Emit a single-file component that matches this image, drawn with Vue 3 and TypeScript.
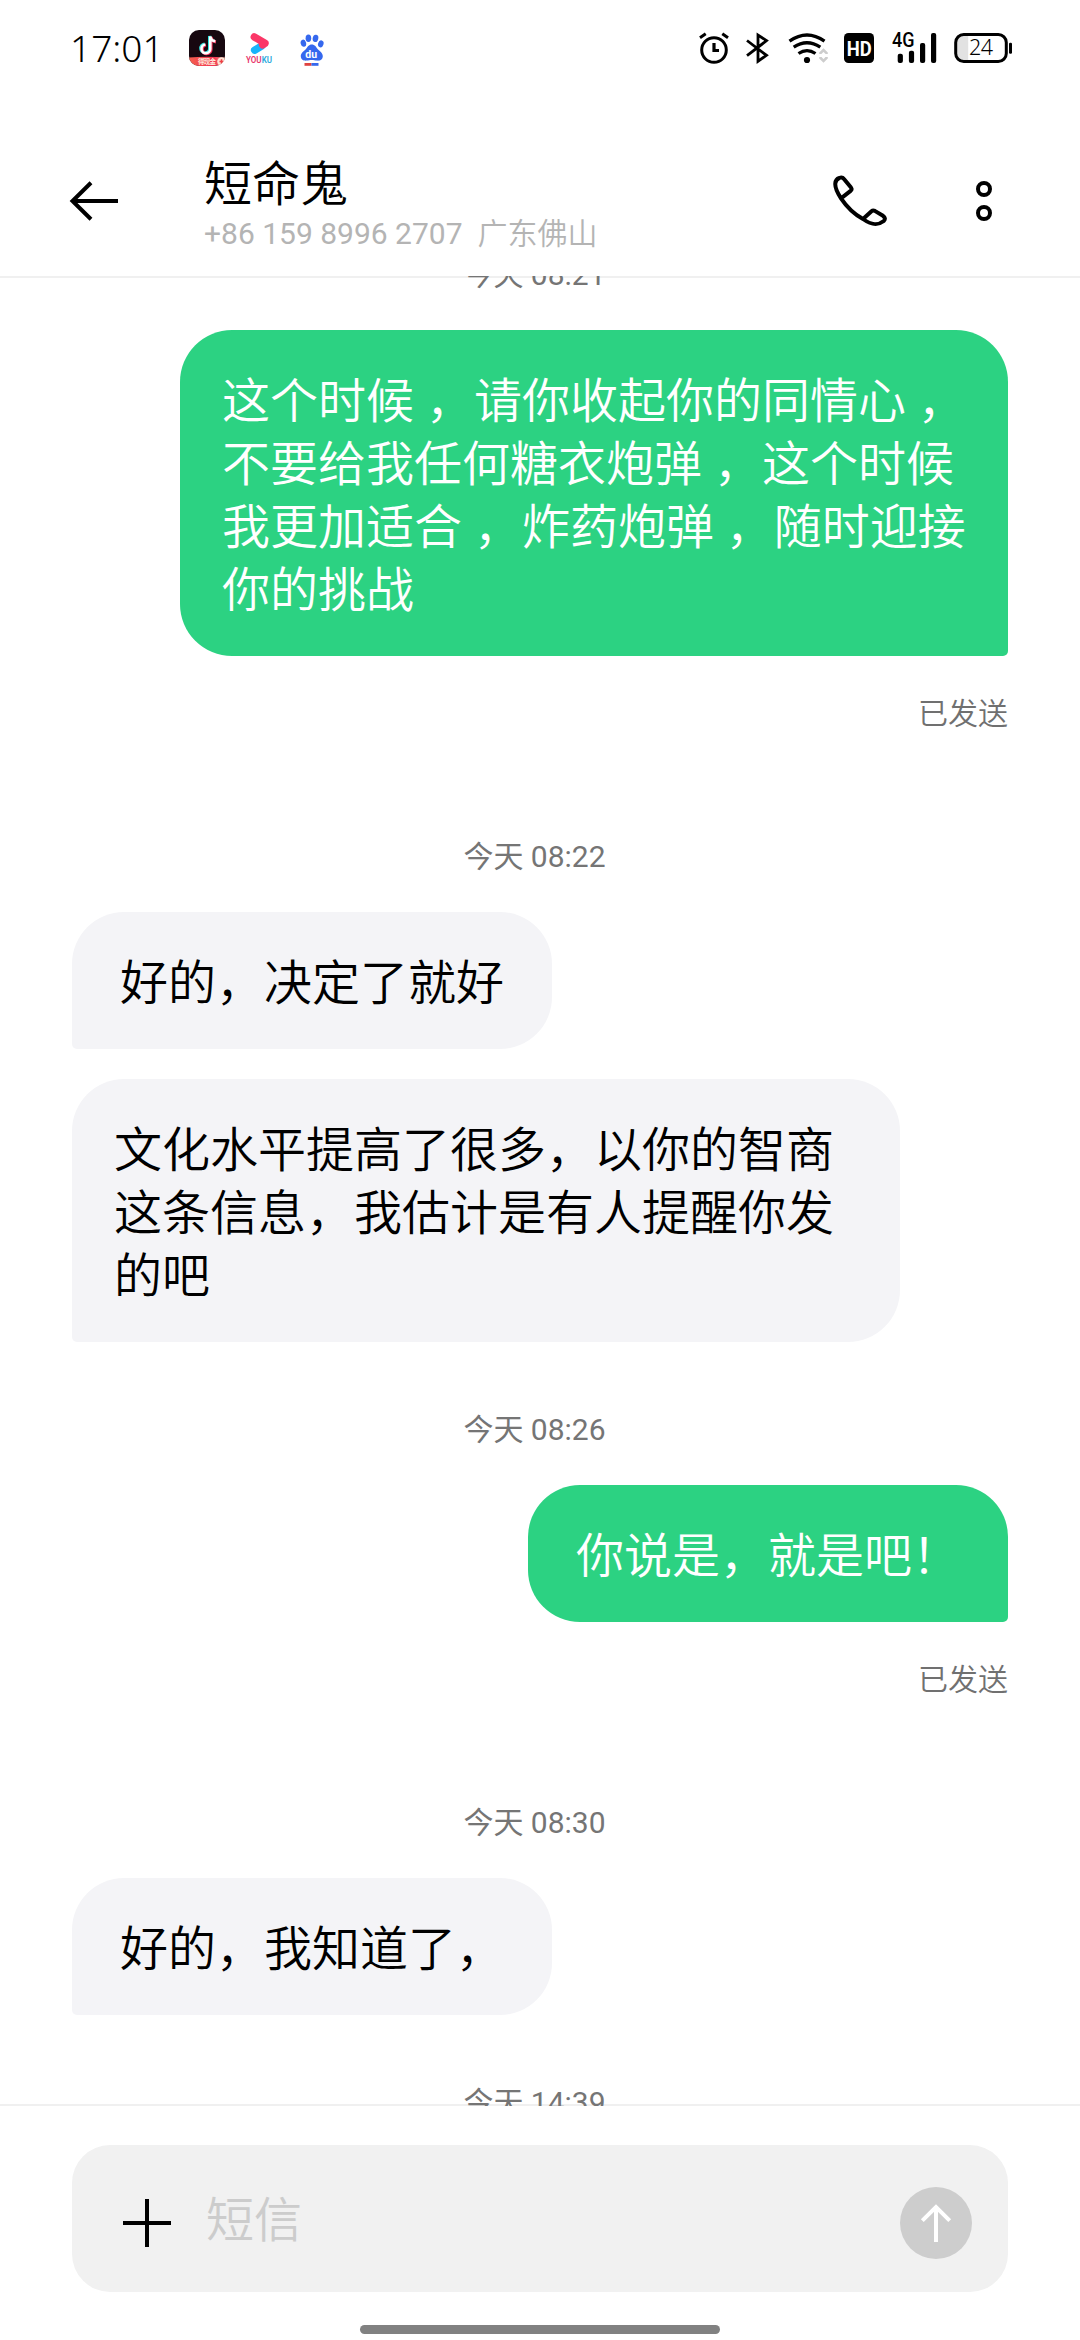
<script setup lang="ts">
interface Entry {
  kind: 'time' | 'in' | 'out' | 'status'
  lines: string[]
}

const contact = { name: '短命鬼', phone: '+86 159 8996 2707', region: '广东佛山' }

const entries: Entry[] = [
  { kind: 'time', lines: ['今天 08:21'] },
  {
    kind: 'out',
    lines: [
      '这个时候 ，请你收起你的同情心 ，',
      '不要给我任何糖衣炮弹 ，这个时候',
      '我更加适合 ，炸药炮弹 ，随时迎接',
      '你的挑战',
    ],
  },
  { kind: 'status', lines: ['已发送'] },
  { kind: 'time', lines: ['今天 08:22'] },
  { kind: 'in', lines: ['好的，决定了就好'] },
  { kind: 'in', lines: ['文化水平提高了很多，以你的智商', '这条信息，我估计是有人提醒你发', '的吧'] },
  { kind: 'time', lines: ['今天 08:26'] },
  { kind: 'out', lines: ['你说是，就是吧！'] },
  { kind: 'status', lines: ['已发送'] },
  { kind: 'time', lines: ['今天 08:30'] },
  { kind: 'in', lines: ['好的，我知道了，'] },
  { kind: 'time', lines: ['今天 14:39'] },
]
</script>

<template>
  <div class="screen">
    <div class="statusbar">
      <span class="clock">17:01</span>
      <div class="apps">
        <svg width="36" height="40" viewBox="189 28 36 40">
          <defs>
            <clipPath id="tile"><rect x="189" y="30" width="36" height="36" rx="10" /></clipPath>
            <linearGradient id="band" x1="0" x2="1">
              <stop offset="0" stop-color="#f5604f" />
              <stop offset="0.7" stop-color="#f23352" />
              <stop offset="1" stop-color="#f7a08c" />
            </linearGradient>
          </defs>
          <g clip-path="url(#tile)">
            <rect x="189" y="30" width="36" height="36" fill="#170810" />
            <g fill="none" stroke-width="3.2">
              <path d="M204.6 44a4.4 4.4 0 1 0 5 4.4V36c.6 3 2.600 4.600 5 4.800" stroke="#35e3e0" />
              <path d="M206 45a4.400 4.400 0 1 0 5 4.400V37c.6 3 2.600 4.600 5 4.800" stroke="#f0335a" />
              <path d="M205.300 44.500a4.400 4.400 0 1 0 5 4.400V36.500c.6 3 2.600 4.600 5 4.800" stroke="#fff" stroke-width="2.600" />
            </g>
            <path d="M189 57.500Q207 56 225 57.500V66H189z" fill="url(#band)" />
            <text x="198" y="64.200" font-size="6.500" font-weight="700" fill="#ffe9dc" textLength="18" class="cjk">得现金</text>
            <circle cx="221.500" cy="61.500" r="4.300" fill="#fbe3d4" />
            <path d="M221.500 59.300v4.400M219.500 61.500h4" stroke="#ee3f45" stroke-width="1.500" />
          </g>
        </svg>
        <svg width="28" height="40" viewBox="245 28 28 40">
          <path d="M254.600 50.200L262 45.800" stroke="#18b4fb" stroke-width="7.400" stroke-linecap="round" />
          <path d="M254.300 37L265 43.300L262.600 44.800" fill="none" stroke="#fb3767" stroke-width="7.400" stroke-linecap="round" stroke-linejoin="round" />
          <text x="246" y="63" font-size="8.300" font-weight="600" textLength="26" lengthAdjust="spacingAndGlyphs" class="latin">
            <tspan fill="#e8356b">YOU</tspan><tspan fill="#2aa9dd">KU</tspan>
          </text>
        </svg>
        <svg width="24" height="40" viewBox="299.500 28 24 40">
          <g fill="#3568ee">
            <ellipse cx="302.900" cy="43.200" rx="2.700" ry="3.600" transform="rotate(-15 302.900 43.200)" />
            <ellipse cx="307.900" cy="38.300" rx="2.800" ry="3.700" />
            <ellipse cx="315" cy="38.400" rx="2.800" ry="3.700" transform="rotate(12 315 38.400)" />
            <ellipse cx="320.300" cy="43.800" rx="2.700" ry="3.600" transform="rotate(18 320.300 43.800)" />
            <path d="M311.300 44.500c3 0 4.500 2.700 6 4.800 2 2 5.200 3.800 5 7.200-.3 3.600-3.300 4.300-5.600 4.100-2.200-.2-3.500-.6-5.400-.6s-3.200.4-5.400.6c-2.300.2-5.300-.5-5.600-4.100-.2-3.400 3-5.200 5-7.200 1.500-2.100 3-4.800 6-4.800z" />
          </g>
          <text x="304.800" y="57.800" font-size="10.500" font-weight="700" fill="#fff" class="latin">du</text>
          <path d="M304 63h7v2.800h-7z" fill="#df4340" />
          <path d="M311 63h7v2.800h-7z" fill="#3568ee" />
        </svg>
      </div>

      <div class="indicators">
        <svg width="30" height="40" viewBox="698 28 30 40" fill="none" stroke="#000">
          <circle cx="713" cy="50" r="12.300" stroke-width="3" />
          <path d="M713 43V50.500H718" stroke-width="3.200" />
          <path d="M699 37.800L704.700 33.800M721.300 33.800L727 37.800" stroke-width="3" />
        </svg>
        <svg class="gap-bt" width="24" height="40" viewBox="744 28 24 40" fill="none" stroke="#000" stroke-width="2.800">
          <path d="M746 40.500L765.500 55.300L757 61.200V35L765.500 40.700L746 55.700" />
        </svg>
        <svg class="gap-wifi" width="42" height="40" viewBox="787 28 42 40" fill="none">
          <path d="M788.500 41.200Q806 28.800 823.500 41.200M792.700 47.200Q806 38.300 819.300 47.200M797.500 53.500Q806 47.800 814.500 53.500" stroke="#000" stroke-width="3.300" />
          <circle cx="806" cy="60" r="3.100" fill="#000" />
          <path d="M819.500 54v-1l3-3 3 3v1M819.500 57v1l3 3 3-3v-1" stroke="#cdcdcd" stroke-width="2.600" />
        </svg>
        <svg class="gap-hd" width="30" height="40" viewBox="843 28 30 40">
          <rect x="843" y="33" width="30" height="30" rx="4.500" />
          <text x="845.700" y="55.600" font-size="21" font-weight="700" fill="#fff" textLength="25" lengthAdjust="spacingAndGlyphs" class="latin">HD</text>
        </svg>
        <svg class="gap-sig" width="45" height="40" viewBox="891 28 45 40">
          <text x="891" y="47" font-size="19.500" font-weight="500" textLength="22.500" lengthAdjust="spacingAndGlyphs" class="latin">4G</text>
          <rect x="896.700" y="53.700" width="5.200" height="9.300" rx="2" />
          <rect x="907.900" y="50.700" width="5.200" height="12.300" rx="2" />
          <rect x="919" y="43" width="5.200" height="20" rx="2" />
          <rect x="930" y="33" width="5.200" height="30" rx="2" />
        </svg>
        <svg class="gap-bat" width="58" height="40" viewBox="953 28 58 40">
          <path d="M962 34.500h5.200v27H962q-7-1-7-8V42q0-6.500 7-7.500z" fill="#e2e2e2" />
          <rect x="954.700" y="34.500" width="50.600" height="27" rx="8" fill="none" stroke="#000" stroke-width="3" />
          <rect x="1008" y="42.700" width="3" height="11" rx="1.200" />
          <text x="968" y="55.400" font-size="21.500" font-weight="300" textLength="24" class="num">24</text>
        </svg>
      </div>
    </div>

    <header class="header">
      <svg class="back" width="50" height="44" viewBox="69 179 50 44" fill="none" stroke="#000" stroke-width="4">
        <path d="M118 201H72M91 182.800L72.500 201L91 219.200" />
      </svg>
      <div class="who">
        <div class="name">{{ contact.name }}</div>
        <div class="phone"><span>{{ contact.phone }}</span><span class="region">{{ contact.region }}</span></div>
      </div>
      <svg class="call" width="56" height="54" viewBox="831 174 56 54" fill="none" stroke="#000" stroke-width="4" stroke-linejoin="round">
        <path d="M840 198.300C836.500 193 834 187 834.300 183.500C834.500 180.500 836 178.800 838.300 178C840.300 177.200 841.600 177.200 843 179L850 187.600Q851.300 189.300 849.600 190.800L840 198.300C845.500 206.500 853 214 862 219L870.500 211.300Q872 210 873.800 210.900L882 215.800Q885.300 218.300 882.800 221C877 225.500 871 225.500 862 219" />
      </svg>
      <svg class="more" width="16" height="40" viewBox="976 181 16 40" fill="none" stroke="#000" stroke-width="4">
        <circle cx="984" cy="189" r="6" />
        <circle cx="984" cy="213" r="6" />
      </svg>
    </header>

    <main class="thread">
      <div
        v-for="(entry, i) in entries"
        :key="i"
        :class="['entry', entry.kind, { long: entry.lines.length > 1 }]"
      >
        <div v-for="line in entry.lines" :key="line" class="line">{{ line }}</div>
      </div>
    </main>

    <footer class="composer">
      <div class="field">
        <svg width="48" height="48" viewBox="0 0 48 48" stroke="#000" stroke-width="4">
          <path d="M24 0V48M0 24H48" />
        </svg>
        <span class="placeholder">短信</span>
        <svg width="72" height="72" viewBox="900 2187 72 72" fill="none">
          <circle cx="936" cy="2223" r="36" fill="#cdcdcd" />
          <path d="M936 2242V2206M922.300 2220.700L936 2207L949.700 2220.700" stroke="#fff" stroke-width="4" />
        </svg>
      </div>
      <div class="homebar"></div>
    </footer>
  </div>
</template>

<style>
body {
  margin: 0;
  background: #fff;
}
</style>

<style scoped>
.screen {
  width: 1080px;
  height: 2340px;
  overflow: hidden;
  display: flex;
  flex-direction: column;
  background: #fff;
  color: #000;
  font-family: Roboto, "Noto Sans CJK SC", sans-serif;
}

svg {
  display: block;
  flex: none;
}

.latin {
  font-family: Roboto, sans-serif;
}

.num {
  font-family: "Noto Sans", sans-serif;
}

.cjk {
  font-family: "Noto Sans CJK SC", sans-serif;
}

.statusbar {
  height: 96px;
  flex: none;
  display: flex;
  align-items: center;
  padding: 0 68px 0 70px;
  box-sizing: border-box;
}

.clock {
  width: 119px;
  padding-bottom: 1px;
  font-family: "Noto Sans", sans-serif;
  font-size: 37px;
  font-weight: 300;
  line-height: 40px;
}

.apps {
  display: flex;
  gap: 20px;
}

.apps svg:last-child {
  margin-left: 6.5px;
}

.indicators {
  display: flex;
  margin-left: auto;
}

.gap-bt {
  margin-left: 16px;
}

.gap-wifi {
  margin-left: 19px;
}

.gap-hd {
  margin-left: 14px;
}

.gap-sig {
  margin-left: 18px;
}

.gap-bat {
  margin-left: 17px;
}

.header {
  height: 180px;
  flex: none;
  display: flex;
  align-items: center;
  box-sizing: border-box;
  padding: 30px 88px 0 69px;
}

.who {
  margin-left: 85px;
  padding-top: 2px;
  flex: 1;
}

.name {
  margin-bottom: 4px;
  font-family: "Noto Sans CJK SC", sans-serif;
  font-size: 48px;
  font-weight: 350;
  line-height: 60px;
}

.phone {
  display: flex;
  gap: 15px;
  font-size: 30px;
  line-height: 40px;
  color: #b4b4b4;
}

.region {
  font-weight: 350;
}

.more {
  margin-left: 88px;
}

.thread {
  height: 1830px;
  flex: none;
  box-sizing: border-box;
  overflow: hidden;
  display: flex;
  flex-direction: column;
  padding: 0 72px;
  background:
    linear-gradient(#f0f0f0, #f0f0f0) 0 0 / 100% 2px no-repeat,
    linear-gradient(#f0f0f0, #f0f0f0) 0 100% / 100% 2px no-repeat;
}

.entry {
  flex: none;
}

.line {
  white-space: pre;
}

.time {
  align-self: center;
  margin: 68px 11px 35px 0;
  font-size: 30px;
  line-height: 40px;
  color: #757575;
}

.time:first-child {
  margin-top: -21px;
}

.status {
  align-self: flex-end;
  margin-top: 38px;
  margin-bottom: 35px;
  font-size: 30px;
  font-weight: 350;
  line-height: 40px;
  color: #707070;
}

.in,
.out {
  box-sizing: border-box;
  padding: 36px 48px 38px;
  font-family: "Noto Sans CJK SC", sans-serif;
  font-size: 48px;
  font-weight: 350;
  line-height: 63px;
}

.in {
  align-self: flex-start;
  background: #f4f4f7;
  border-radius: 52px 52px 52px 5px;
}

.out {
  align-self: flex-end;
  color: #fff;
  background: #2cd282;
  border-radius: 52px 52px 5px 52px;
}

.in + .in {
  margin-top: 30px;
}

.long {
  width: 828px;
  padding: 36px 42px 38px;
  word-spacing: 1.2px;
}

.composer {
  flex: 1;
  display: flex;
  flex-direction: column;
  align-items: center;
  justify-content: space-between;
  padding: 39px 0 6px;
  box-sizing: border-box;
}

.field {
  width: 936px;
  height: 147px;
  box-sizing: border-box;
  display: flex;
  align-items: center;
  padding: 9px 36px 0 51px;
  border-radius: 38px;
  background: #f1f1f1;
}

.placeholder {
  flex: 1;
  margin-left: 35px;
  padding-bottom: 14px;
  font-family: "Noto Sans CJK SC", sans-serif;
  font-size: 48px;
  font-weight: 350;
  line-height: 60px;
  color: #ccc;
}

.homebar {
  width: 360px;
  height: 9px;
  border-radius: 5px;
  background: #818181;
}
</style>
